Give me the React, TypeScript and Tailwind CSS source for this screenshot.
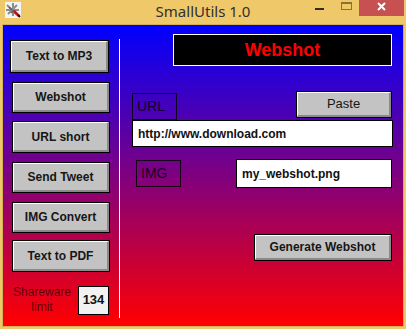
import React from 'react';

const SIDE_BUTTONS = [
  { label: 'Text to MP3', cls: 'w-[99px] h-[33px] mt-[15px]' },
  { label: 'Webshot', cls: 'ml-[2px] w-[98px] h-[31px] mt-[9px]' },
  { label: 'URL short', cls: 'ml-[2px] w-[98px] h-[32px] mt-[8px]' },
  { label: 'Send Tweet', cls: 'ml-[2px] w-[98px] h-[31px] mt-[9px]' },
  { label: 'IMG Convert', cls: 'ml-[2px] w-[98px] h-[31px] mt-[9px]' },
  { label: 'Text to PDF', cls: 'ml-[2px] w-[98px] h-[32px] mt-[7px]' },
];

const Bevel: React.FC<{ className?: string; bold?: boolean; children: React.ReactNode }> = ({ className = '', bold = true, children }) => (
  <div className={`shrink-0 border border-black ${className}`}>
    <div
      className={`flex h-full items-center justify-center border-t border-l border-t-white border-l-white border-b-2 border-r-2 border-b-[#8a8a8a] border-r-[#8a8a8a] bg-[#c3c3c3] text-[#161616] ${
        bold ? 'text-[12px] font-bold' : 'text-[13px]'
      }`}
    >
      {children}
    </div>
  </div>
);

const AppIcon = () => (
  <svg width="16" height="16" viewBox="0 0 16 16">
    <rect width="16" height="16" fill="#f4f4f4" />
    <path d="M2 3l10 10M3 12l9-9M1 8h13M8 1v13" stroke="#8d8d8d" strokeWidth="2" />
    <path d="M4 5l3 3M6 11l3-3" stroke="#5e5e5e" strokeWidth="1.5" />
    <path d="M9 9l5 5" stroke="#c0121a" strokeWidth="2.5" />
    <path d="M13 13l2 2" stroke="#3a0000" strokeWidth="2" />
  </svg>
);

const App: React.FC = () => {
  return (
    <div className="w-[406px] h-[329px] bg-[#efc86a] font-['Liberation_Sans',Arial,sans-serif] overflow-hidden">
      {/* title bar */}
      <div className="relative h-[24px]">
        <div className="absolute left-[5px] top-[2px]">
          <AppIcon />
        </div>
        <div className="absolute inset-x-0 top-[1px] text-center font-['Noto_Sans',sans-serif] text-[15px] leading-[20px] text-[#303030]">
          SmallUtils 1.0
        </div>
        <div className="absolute left-[315px] top-[8px] h-[2px] w-[9px] bg-[#2e2e2e]" />
        <div className="absolute left-[341px] top-[2px] h-[8px] w-[11px] border border-t-2 border-[#8c703a]" />
        <div className="absolute left-[359px] top-0 flex h-[16px] w-[45px] items-start justify-center bg-[#c75050]">
          <svg width="9" height="9" viewBox="0 0 9 9" className="mt-[2px]">
            <path d="M1 1l7 7M8 1L1 8" stroke="#fff" strokeWidth="2" />
          </svg>
        </div>
      </div>

      {/* client area */}
      <div className="mx-[2px] border border-[#d5b05b]">
        <div className="flex h-[301px] w-[400px] bg-[linear-gradient(to_bottom,#0000ff,#ff0000)]">
          {/* left column */}
          <div className="flex w-[116px] flex-col pl-[7px]">
            {SIDE_BUTTONS.map((b) => (
              <Bevel key={b.label} className={b.cls}>
                {b.label}
              </Bevel>
            ))}
            <div className="mt-[13px] flex items-center">
              <div className="ml-[1px] w-[62px] text-center text-[12px] leading-[15px] text-black/60">
                Shareware
                <br />
                limit
              </div>
              <div className="ml-[5px] flex h-[29px] w-[31px] items-center justify-center border border-black bg-[#f2f2f2] text-[13px] font-bold text-[#111]">
                134
              </div>
            </div>
          </div>

          <div className="mt-[14px] h-[279px] w-px bg-white" />

          {/* right panel */}
          <div className="flex flex-1 flex-col">
            <div className="ml-[53px] mt-[9px] flex h-[32px] w-[219px] items-center justify-center border border-white bg-black text-[18px] font-bold text-[#ff0000]">
              Webshot
            </div>

            <div className="mt-[25px] flex items-start">
              <div className="ml-[12px] mt-[2px] flex h-[27px] w-[45px] items-center border border-black/85 pl-[4px] text-[14px] text-black/80">
                URL
              </div>
              <Bevel bold={false} className="ml-auto mr-[11px] h-[27px] w-[96px]">
                Paste
              </Bevel>
            </div>
            <div className="ml-[12px] flex h-[27px] w-[261px] items-center border border-black bg-white pl-[5px] text-[12px] font-bold text-[#111]">
              http://www.download.com
            </div>

            <div className="mt-[12px] flex items-start">
              <div className="ml-[16px] mt-[1px] flex h-[27px] w-[45px] items-center border border-black/85 pl-[4px] text-[14px] text-black/80">
                IMG
              </div>
              <div className="ml-auto mr-[11px] flex h-[29px] w-[156px] items-center border border-black bg-white pl-[5px] text-[12px] font-bold text-[#111]">
                my_webshot.png
              </div>
            </div>

            <div className="mt-[46px] flex">
              <Bevel className="ml-auto mr-[11px] h-[27px] w-[138px]">Generate Webshot</Bevel>
            </div>
          </div>
        </div>
      </div>
    </div>
  );
};

export default App;
